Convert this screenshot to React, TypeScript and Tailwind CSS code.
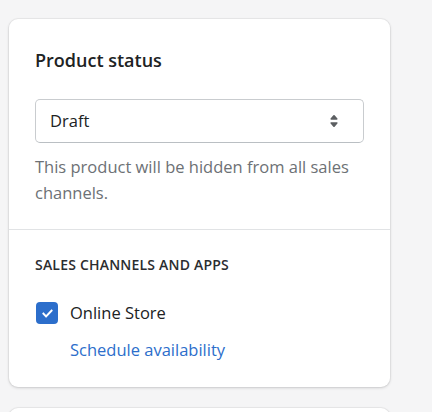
import { useState } from 'react'

function SelectArrows() {
  return (
    <svg viewBox="0 0 20 20" className="h-[24px] w-[24px] fill-[#5c5f62]">
      <path d="M7.676 9h4.648c.563 0 .879-.603.53-1.014l-2.323-2.746a.708.708 0 0 0-1.062 0l-2.324 2.746c-.347.411-.032 1.014.531 1.014Zm4.648 2h-4.648c-.563 0-.878.603-.53 1.014l2.323 2.746c.27.316.792.316 1.062 0l2.323-2.746c.349-.411.033-1.014-.53-1.014Z" />
    </svg>
  )
}

export default function App() {
  const [status, setStatus] = useState('Draft')
  const [online, setOnline] = useState(true)

  return (
    <div
      className="h-[412px] overflow-hidden bg-[#f5f5f6] pl-[9px] pt-[19px]"
      style={{ fontFamily: '"Open Sans", "Noto Sans", sans-serif' }}
    >
      <div className="w-[381px] rounded-[9px] bg-white shadow-[0_0_0_1px_rgba(63,63,68,0.05),0_1px_3px_0_rgba(63,63,68,0.2)]">
        <div className="px-[26px] pb-[23px] pt-[28px]">
          <h2 className="text-[18px] font-semibold leading-[26px] text-[#202223]">
            Product status
          </h2>

          <label className="relative mt-[26px] block">
            <select
              value={status}
              onChange={(e) => setStatus(e.target.value)}
              className="h-[44px] w-full appearance-none rounded-[5px] border border-[#c9cccf] border-b-[#babfc3] bg-white pl-[14px] pr-[36px] text-[16.5px] text-[#202223] outline-none"
            >
              <option>Active</option>
              <option>Draft</option>
            </select>
            <span className="pointer-events-none absolute right-[18px] top-[10px]">
              <SelectArrows />
            </span>
          </label>

          <p className="mt-[11px] text-[16.5px] leading-[26px] text-[#6d7175]">
            This product will be hidden from all sales channels.
          </p>
        </div>

        <div className="border-t border-[#e1e3e5] px-[26px] pb-[25px] pt-[24px]">
          <h3 className="text-[14px] font-semibold leading-[22px] tracking-[0.2px] text-[#2b2d2f]">
            SALES CHANNELS AND APPS
          </h3>

          <label className="mt-[25px] flex cursor-pointer items-center gap-[12px]">
            <span className="ml-[1px] flex h-[22px] w-[22px] items-center justify-center rounded-[4px] bg-[#2c6ecb]">
              <input
                type="checkbox"
                checked={online}
                onChange={(e) => setOnline(e.target.checked)}
                className="sr-only"
              />
              {online && (
                <svg viewBox="0 0 20 20" className="h-[21px] w-[21px] fill-white">
                  <path d="M8.315 13.859l-3.182-3.417a.506.506 0 0 1 0-.684l.643-.683a.437.437 0 0 1 .642 0l2.22 2.393 4.942-5.327a.436.436 0 0 1 .643 0l.643.684a.504.504 0 0 1 0 .683l-5.91 6.35a.437.437 0 0 1-.642 0" />
                </svg>
              )}
            </span>
            <span className="text-[16.5px] leading-[24px] text-[#202223]">Online Store</span>
          </label>

          <a
            href="#"
            className="ml-[35px] mt-[13px] block text-[16.5px] leading-[24px] text-[#2c6ecb]"
          >
            Schedule availability
          </a>
        </div>
      </div>

      <div className="mt-[21px] h-[40px] w-[381px] rounded-t-[9px] bg-white shadow-[0_0_0_1px_rgba(63,63,68,0.05),0_1px_3px_0_rgba(63,63,68,0.2)]" />
    </div>
  )
}
